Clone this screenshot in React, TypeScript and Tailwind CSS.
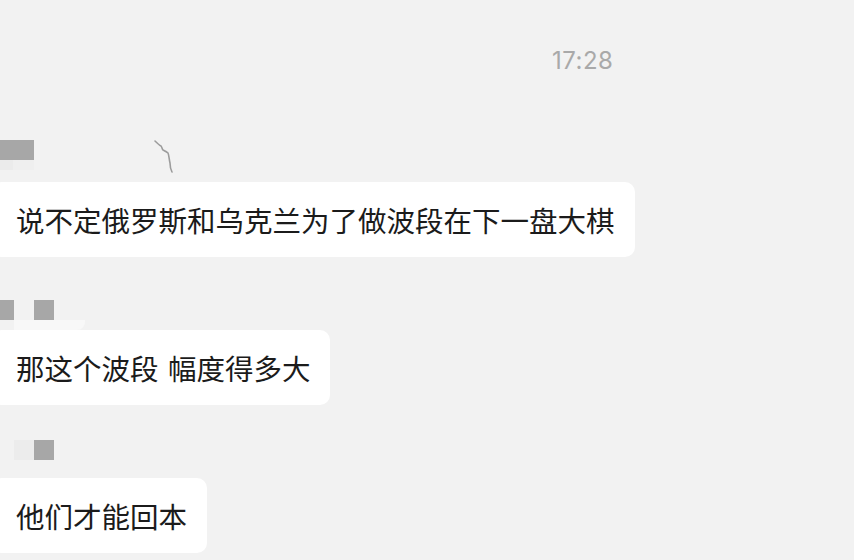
const CJK = "font-['Noto_Sans_CJK_SC','Noto_Sans',sans-serif]";

function Bubble({ text, wide }: { text: string; wide?: boolean }) {
  return (
    <div className="flex">
      <div
        className={`ml-[-8px] rounded-[10px] bg-white pl-[24px] pr-[20px] py-[18px] text-[28.5px] leading-[39px] text-[#1b1b1b] ${CJK} ${
          wide ? "[word-spacing:3px]" : ""
        }`}
      >
        {text}
      </div>
    </div>
  );
}

export default function App() {
  return (
    <div className="w-[854px] h-[560px] overflow-hidden bg-[#f2f2f2] flex flex-col">
      {/* time stamp */}
      <div className="mt-[48px] pl-[552px] text-[24px] leading-[26px] tracking-[0.5px] text-[#a9a9a9] font-['Inter','Liberation_Sans',sans-serif]">
        17:28
      </div>

      {/* sender 1 (masked name) */}
      <div className="mt-[66px] flex flex-col">
        <div className="flex h-[20px] items-start">
          <div className="w-[34px] h-[20px] bg-[#a7a7a7]" />
          <svg
            className="ml-[119px] overflow-visible"
            width="22"
            height="34"
            viewBox="0 0 22 34"
            fill="none"
          >
            <path
              d="M2 1 C4 3 6 5 8 6 C9 7 9 9 10 10 C12 11 14 12 15 13 C16 15 16 19 17 23 C17 27 18 30 19 32"
              stroke="#9c9c9c"
              strokeWidth="1.6"
              strokeLinecap="round"
            />
          </svg>
        </div>
        <div className="flex h-[10px]">
          <div className="w-[13px] bg-[#ebebeb]" />
          <div className="w-[21px] bg-[#efefef]" />
        </div>
      </div>
      <div className="mt-[12px]">
        <Bubble text="说不定俄罗斯和乌克兰为了做波段在下一盘大棋" />
      </div>

      {/* sender 2 */}
      <div className="mt-[43px] flex flex-col">
        <div className="flex h-[20px]">
          <div className="w-[14px] bg-[#a7a7a7]" />
          <div className="w-[20px]" />
          <div className="w-[20px] bg-[#a7a7a7]" />
        </div>
        <div className="ml-[14px] w-[71px] h-[10px] bg-[#f8f8f8] rounded-br-[8px]" />
      </div>
      <Bubble text="那这个波段 幅度得多大" wide />

      {/* sender 3 */}
      <div className="mt-[35px] flex h-[20px] pl-[14px]">
        <div className="w-[20px] bg-[#ececec]" />
        <div className="w-[20px] bg-[#a7a7a7]" />
      </div>
      <div className="mt-[18px]">
        <Bubble text="他们才能回本" />
      </div>
    </div>
  );
}
